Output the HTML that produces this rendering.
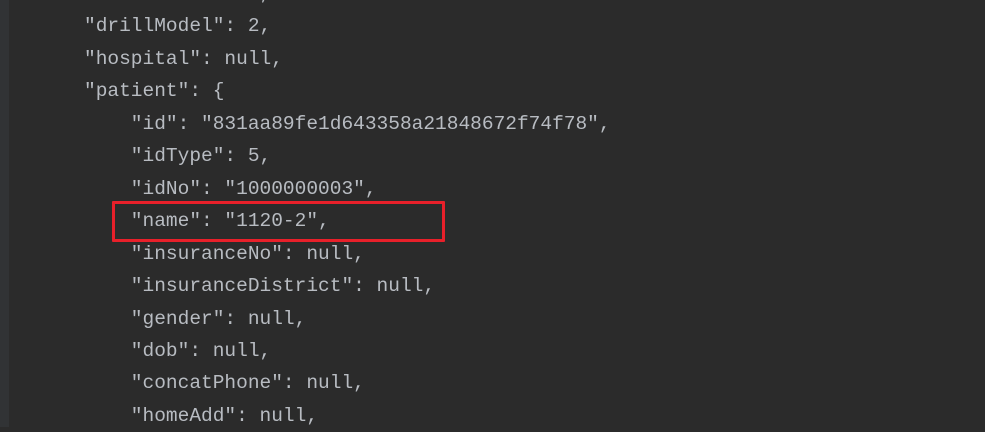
<!DOCTYPE html>
<html><head><meta charset="utf-8"><style>
html,body{margin:0;padding:0;}
body{width:985px;height:427px;background:#2b2b2b;overflow:hidden;position:relative;}
.g{position:absolute;left:0;top:0;width:9px;height:427px;background:#313335;}
pre{position:absolute;left:84px;top:-22px;margin:0;font-family:"Liberation Mono","DejaVu Sans Mono",monospace;font-size:19.5px;line-height:32.45px;color:#b8bcc2;}
.box{position:absolute;left:112px;top:201px;width:327px;height:35px;border:3px solid #e8202a;border-radius:1px;}
</style></head><body>
<div class="g"></div>
<pre>"catCode": null,
"drillModel": 2,
"hospital": null,
"patient": {
    "id": "831aa89fe1d643358a21848672f74f78",
    "idType": 5,
    "idNo": "1000000003",
    "name": "1120-2",
    "insuranceNo": null,
    "insuranceDistrict": null,
    "gender": null,
    "dob": null,
    "concatPhone": null,
    "homeAdd": null,</pre>
<div class="box"></div>
</body></html>
